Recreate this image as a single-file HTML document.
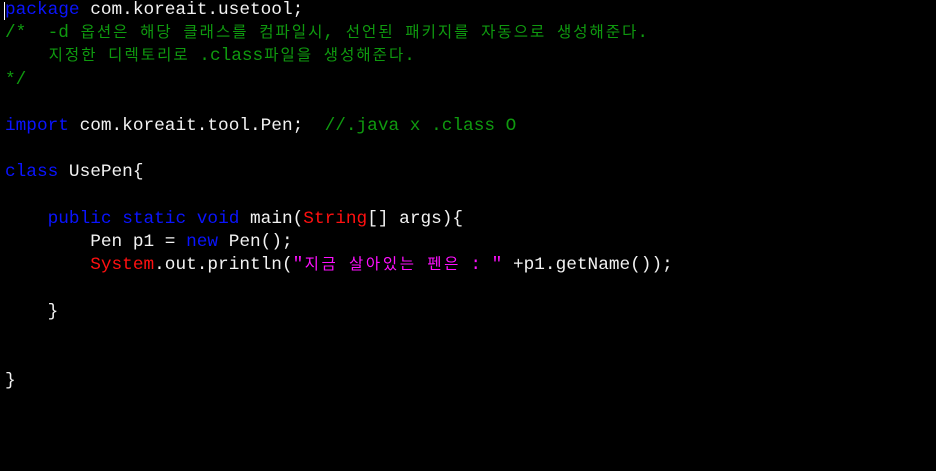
<!DOCTYPE html>
<html><head><meta charset="utf-8"><style>
html,body{margin:0;padding:0;background:#000;width:936px;height:471px;overflow:hidden}
pre{margin:0;position:absolute;left:5px;top:-1px;font-family:"Liberation Mono","Noto Sans CJK KR",monospace;font-size:17.75px;line-height:23.2px;color:#f2f2f2}
.k{display:inline-block;width:16.3px;text-align:center;font-family:"Noto Sans CJK KR","NanumGothic",sans-serif;font-size:15.5px;line-height:16px}
.m .k{width:16.9px}
.b{color:#0a14ff}.g{color:#0f9a0f}.r{color:#ff1010}.m{color:#ff10ff}
.cur{position:absolute;left:4px;top:2px;width:1px;height:18px;background:#fff}
</style></head><body>
<div class="cur"></div>
<pre><span class="b">package</span> com.koreait.usetool;
<span class="g">/*  -d <span class="k">옵</span><span class="k">션</span><span class="k">은</span> <span class="k">해</span><span class="k">당</span> <span class="k">클</span><span class="k">래</span><span class="k">스</span><span class="k">를</span> <span class="k">컴</span><span class="k">파</span><span class="k">일</span><span class="k">시</span>, <span class="k">선</span><span class="k">언</span><span class="k">된</span> <span class="k">패</span><span class="k">키</span><span class="k">지</span><span class="k">를</span> <span class="k">자</span><span class="k">동</span><span class="k">으</span><span class="k">로</span> <span class="k">생</span><span class="k">성</span><span class="k">해</span><span class="k">준</span><span class="k">다</span>.
    <span class="k">지</span><span class="k">정</span><span class="k">한</span> <span class="k">디</span><span class="k">렉</span><span class="k">토</span><span class="k">리</span><span class="k">로</span> .class<span class="k">파</span><span class="k">일</span><span class="k">을</span> <span class="k">생</span><span class="k">성</span><span class="k">해</span><span class="k">준</span><span class="k">다</span>.
*/</span>

<span class="b">import</span> com.koreait.tool.Pen;  <span class="g">//.java x .class O</span>

<span class="b">class</span> UsePen{

    <span class="b">public</span> <span class="b">static</span> <span class="b">void</span> main(<span class="r">String</span>[] args){
        Pen p1 = <span class="b">new</span> Pen();
        <span class="r">System</span>.out.println(<span class="m">"<span class="k">지</span><span class="k">금</span> <span class="k">살</span><span class="k">아</span><span class="k">있</span><span class="k">는</span> <span class="k">펜</span><span class="k">은</span> : "</span> +p1.getName());

    }


}</pre>
</body></html>
